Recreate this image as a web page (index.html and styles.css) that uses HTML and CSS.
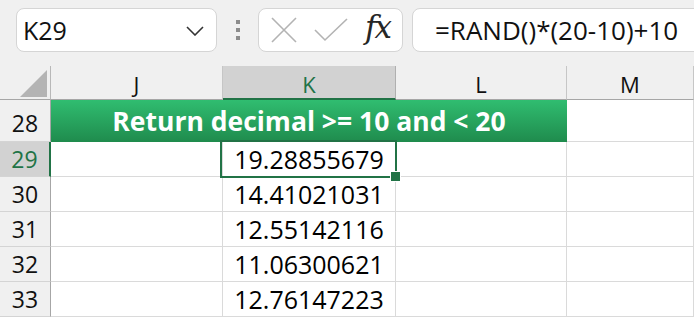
FILE: index.html
```html
<!DOCTYPE html>
<html lang="en">
<head>
  <meta charset="UTF-8">
  <title>RAND decimal</title>
  <link rel="stylesheet" href="styles.css">
</head>
<body>
<div class="app">
  <div class="toolbar">
    <div class="namebox">
      <span>K29</span>
      <svg class="chev" width="18" height="10" viewBox="0 0 18 10"><path d="M1 1 L9 9 L17 1" fill="none" stroke="#333" stroke-width="1.6"/></svg>
    </div>
    <div class="dots"><i></i><i></i><i></i></div>
    <div class="fbtns">
      <svg width="26" height="26" viewBox="0 0 26 26"><path d="M1 1 L25 25 M25 1 L1 25" stroke="#b3b3b3" stroke-width="1.6" fill="none"/></svg>
      <svg width="34" height="24" viewBox="0 0 34 24"><path d="M1 12 L11 22 L33 1" stroke="#b3b3b3" stroke-width="1.6" fill="none"/></svg>
      <span class="fx">fx</span>
    </div>
    <div class="formula">=RAND()*(20-10)+10</div>
  </div>

  <div class="sheet">
    <div class="corner"><b></b></div>
    <div class="colhead">J</div>
    <div class="colhead active">K</div>
    <div class="colhead">L</div>
    <div class="colhead">M</div>

    <div class="rowhead tall">28</div>
    <div class="title">Return decimal &gt;= 10 and &lt; 20</div>
    <div class="cell tall"></div>

    <div class="rowhead active">29</div>
    <div class="cell"></div>
    <div class="cell num selected">19.28855679</div>
    <div class="cell"></div>
    <div class="cell"></div>

    <div class="rowhead">30</div>
    <div class="cell"></div>
    <div class="cell num">14.41021031</div>
    <div class="cell"></div>
    <div class="cell"></div>

    <div class="rowhead">31</div>
    <div class="cell"></div>
    <div class="cell num">12.55142116</div>
    <div class="cell"></div>
    <div class="cell"></div>

    <div class="rowhead">32</div>
    <div class="cell"></div>
    <div class="cell num">11.06300621</div>
    <div class="cell"></div>
    <div class="cell"></div>

    <div class="rowhead">33</div>
    <div class="cell"></div>
    <div class="cell num">12.76147223</div>
    <div class="cell"></div>
    <div class="cell"></div>
  </div>
</div>
</body>
</html>
```

FILE: styles.css
```css
* {
  margin: 0;
  padding: 0;
  box-sizing: border-box;
}

body {
  background: #fff;
  font-family: "Open Sans", "Noto Sans", sans-serif;
  color: #111;
}

.app {
  width: 694px;
  height: 320px;
  overflow: hidden;
}

.toolbar {
  height: 66px;
  background: #f0f0f0;
  display: flex;
  align-items: flex-start;
  padding: 8px 0 0 16px;
  overflow: hidden;
}

.toolbar > * {
  flex-shrink: 0;
}

.namebox {
  width: 201px;
  height: 44px;
  background: #fff;
  border: 1px solid #d5d5d5;
  border-radius: 8px;
  display: flex;
  align-items: center;
  justify-content: space-between;
  padding: 0 12px 0 6px;
  font-size: 25px;
}

.chev {
  margin-top: 2px;
}

.dots {
  margin: 12px 0 0 19px;
  display: flex;
  flex-direction: column;
  gap: 4px;
}

.dots i {
  display: block;
  width: 4px;
  height: 4px;
  background: #8c8c8c;
}

.fbtns {
  margin-left: 18px;
  width: 145px;
  height: 44px;
  background: #fff;
  border: 1px solid #d5d5d5;
  border-radius: 8px;
  display: flex;
  align-items: center;
  padding: 0 0 0 12px;
  gap: 19px;
}

.fbtns svg:nth-child(2) {
  margin-left: -2px;
}

.fx {
  font-family: "DejaVu Serif", "Liberation Serif", serif;
  font-style: italic;
  font-size: 31px;
  color: #262626;
  margin-left: -2px;
  margin-top: -6px;
  letter-spacing: -2px;
}

.formula {
  margin-left: 9px;
  width: 320px;
  height: 44px;
  background: #fff;
  border: 1px solid #d5d5d5;
  border-radius: 8px;
  padding-left: 22px;
  font-size: 26px;
  line-height: 42px;
}

.sheet {
  display: grid;
  grid-template-columns: 51px 172px 173px 171px 1fr;
  grid-template-rows: 34px 42px repeat(5, 35px);
  position: relative;
}

.corner {
  background: #f0f0f0;
  border-right: 1px solid #b8b8b8;
  border-bottom: 1px solid #a6a6a6;
  position: relative;
}

.corner b {
  position: absolute;
  right: 3px;
  bottom: 2px;
  width: 27px;
  height: 27px;
  background: #b4b4b4;
  clip-path: polygon(100% 0, 100% 100%, 0 100%);
}

.colhead {
  background: #f0f0f0;
  border-right: 1px solid #c6c6c6;
  border-bottom: 1px solid #a6a6a6;
  text-align: center;
  font-size: 22px;
  line-height: 36px;
}

.colhead.active {
  background: #d2d2d2;
  color: #217346;
  border-bottom: 2px solid #217346;
  border-right-color: #b0b0b0;
}

.rowhead {
  background: #f0f0f0;
  border-right: 1px solid #a6a6a6;
  border-bottom: 1px solid #d4d4d4;
  text-align: center;
  font-size: 23px;
  line-height: 34px;
}

.rowhead.tall {
  line-height: 46px;
}

.rowhead.active {
  background: #d2d2d2;
  color: #217346;
  border-right: 2px solid #217346;
}

.title {
  grid-column: 2 / 5;
  background: linear-gradient(#30bd70, #1f8b4d);
  color: #fff;
  font-weight: bold;
  font-size: 26.5px;
  text-align: center;
  line-height: 42px;
}

.cell {
  border-right: 1px solid #dadada;
  border-bottom: 1px solid #dadada;
  font-size: 25px;
  line-height: 34px;
  color: #000;
}

.num {
  text-align: center;
}

.selected {
  position: relative;
}

.selected::after {
  content: "";
  position: absolute;
  left: -3px;
  top: -2px;
  right: -2px;
  bottom: -2px;
  border: 2px solid #217346;
}

.selected::before {
  content: "";
  position: absolute;
  right: -6px;
  bottom: -6px;
  width: 9px;
  height: 9px;
  background: #217346;
  border: 1px solid #fff;
  z-index: 1;
}
```
